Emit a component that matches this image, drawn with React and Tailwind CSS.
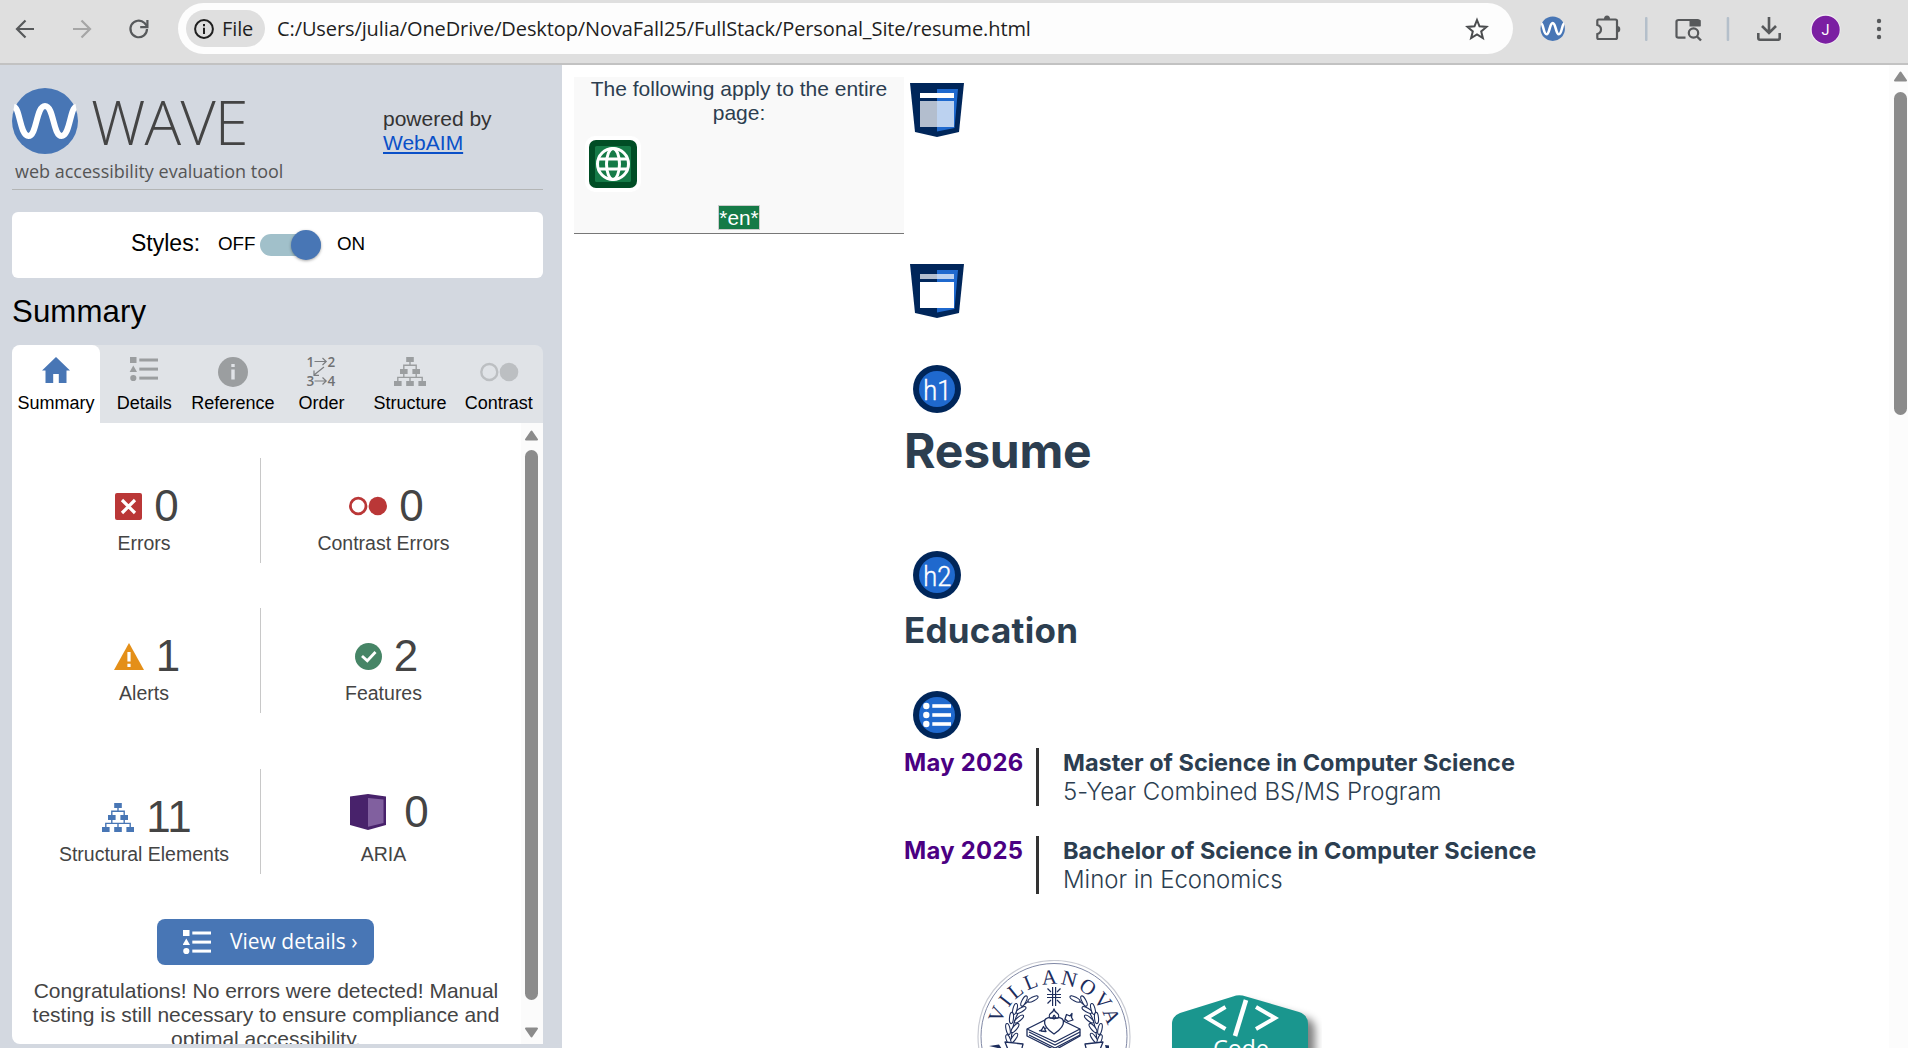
import React from "react";

const BLUE = "#4876b5";

function WaveMark({ size, className = "" }) {
  return (
    <svg width={size} height={size} viewBox="0 0 66 66" className={className}>
      <circle cx="33" cy="33" r="33" fill={BLUE} />
      <path
        d="M2 19 C8 20 8 48 16.5 48 C25 48 24 18 33 18 C42 18 41 48 49.5 48 C58 48 58 20 64 19"
        fill="none"
        stroke="#fff"
        strokeWidth="6"
      />
    </svg>
  );
}

function ListShapes({ color }) {
  return (
    <g fill={color}>
      <rect x="0" y="0" width="6.5" height="6" />
      <path d="M3.3 8.5L7 15H-.4z" />
      <circle cx="3.3" cy="21" r="3.1" />
      <rect x="9.3" y="1.5" width="18.7" height="3" />
      <rect x="9.3" y="10.6" width="18.7" height="3" />
      <rect x="9.3" y="19.6" width="18.7" height="3" />
    </g>
  );
}

function TreeShapes({ color }) {
  return (
    <g fill={color}>
      <rect x="12.2" y="0" width="7.6" height="5" />
      <rect x="6" y="12" width="7.6" height="5" />
      <rect x="18.4" y="12" width="7.6" height="5" />
      <rect x="0" y="24" width="7.6" height="5" />
      <rect x="12.2" y="24" width="7.6" height="5" />
      <rect x="24.4" y="24" width="7.6" height="5" />
      <path
        d="M16 5V8.3M9.8 12V8.3H22.2V12M9.8 17V20.4M22.2 17V20.4M3.8 24V20.4H28.2V24M16 20.4V24"
        fill="none"
        stroke={color}
        strokeWidth="1.4"
      />
    </g>
  );
}

function Tab({ label, active, children }) {
  return (
    <div
      className={
        active
          ? "flex w-[88px] flex-col items-center rounded-t-lg bg-white"
          : "flex w-[88.6px] flex-col items-center"
      }
    >
      <svg width="40" height="40" viewBox="0 0 40 40" className="mt-[6px]">
        {children}
      </svg>
      <span className="text-[18px] leading-6 text-black">{label}</span>
    </div>
  );
}

function Stat({ icon, value, label, raised }) {
  return (
    <div className="flex flex-col items-center text-[#444]">
      <div
        className={
          raised
            ? "mt-[21px] mb-2 flex h-[44px] items-center gap-[18px] pl-[12px]"
            : "mt-[26px] mb-[3px] flex h-[44px] items-center gap-[12px] pl-[6px]"
        }
      >
        {icon}
        <span className="text-[44px] leading-[44px]">{value}</span>
      </div>
      <span className="text-[19.5px] leading-6">{label}</span>
    </div>
  );
}

function StatRow({ left, right, className }) {
  return (
    <div className={className}>
      <div className="w-[248px] pl-[16px]">{left}</div>
      <div className="w-px bg-[#c8c8c8]" />
      <div className="w-[245px]">{right}</div>
    </div>
  );
}

function Scrollbar({ thumb, down, className }) {
  return (
    <div className={className}>
      <svg width="15" height="11" viewBox="0 0 15 11" className="shrink-0">
        <path d="M7.5 1.5L13 9.5H2z" fill="#8b8b8b" stroke="#8b8b8b" strokeWidth="2" strokeLinejoin="round" />
      </svg>
      <div className={thumb} />
      {down && (
        <svg width="15" height="11" viewBox="0 0 15 11" className="mt-[27px] shrink-0">
          <path d="M7.5 9.5L13 1.5H2z" fill="#8b8b8b" stroke="#8b8b8b" strokeWidth="2" strokeLinejoin="round" />
        </svg>
      )}
    </div>
  );
}

function Shield({ header, className }) {
  return (
    <svg width="54" height="54" viewBox="0 0 54 54" className={className}>
      <path d="M0 0H54L49 49L27 54L5 49z" fill="#00265a" />
      <path d="M27 6H48L44.5 45L27 48.5z" fill="#1f69ce" />
      <rect x="10" y="10" width="34" height="5" fill="#fff" opacity={header ? 1 : 0.7} />
      <rect x="10" y="18" width="34" height="26" fill="#fff" opacity={header ? 0.7 : 1} />
    </svg>
  );
}

function Marker({ label, className }) {
  return (
    <svg width="48" height="48" viewBox="0 0 48 48" className={className}>
      <circle cx="24" cy="24" r="24" fill="#00265a" />
      <circle cx="24" cy="24" r="18" fill="#1f69ce" />
      {label ? (
        <text
          x="10.3"
          y="34.6"
          fontSize="27"
          fontWeight="300"
          textLength="28"
          lengthAdjust="spacingAndGlyphs"
          fill="#fff"
          stroke="#fff"
          strokeWidth="0.4"
          className="font-['Roboto',sans-serif]"
        >
          {label}
        </text>
      ) : (
        <g fill="#fff">
          <circle cx="13.3" cy="15" r="3.2" />
          <circle cx="13.3" cy="24" r="3.2" />
          <circle cx="13.3" cy="33" r="3.2" />
          <rect x="19.3" y="13.2" width="18.7" height="3.6" />
          <rect x="19.3" y="22.2" width="18.7" height="3.6" />
          <rect x="19.3" y="31.2" width="18.7" height="3.6" />
        </g>
      )}
    </svg>
  );
}

function Degree({ date, title, detail }) {
  return (
    <div className="flex h-[58px] leading-[29px] whitespace-nowrap">
      <div className="w-[132px] text-[23.8px] font-bold tracking-[0.3px] text-[#4b0082]">{date}</div>
      <div className="w-[3px] bg-[#333]" />
      <div className="ml-6">
        <div className="text-[23.5px] font-bold">{title}</div>
        <div className="text-[24px] font-[350] tracking-[-0.03px]">{detail}</div>
      </div>
    </div>
  );
}

const laurel = [
  [56, 39, 62], [47, 41, 28], [44, 50, 60], [38, 49, 15], [42, 59, 50],
  [34.5, 58, 5], [38, 68, 40], [31, 69, -12], [37, 78, 35], [31.5, 80, -20],
];

function Laurel() {
  return (
    <g fill="#fff" stroke="#1d2d5c" strokeWidth="1.1">
      <path d="M60 36C46 42 34 56 34 86" fill="none" />
      {laurel.map(([x, y, r], i) => (
        <ellipse key={i} cx={x} cy={y} rx="2" ry="5.6" transform={`rotate(${r} ${x} ${y})`} />
      ))}
    </g>
  );
}

function Seal() {
  return (
    <svg width="154" height="88" viewBox="0 0 154 88" className="shrink-0 overflow-hidden">
      <circle cx="77" cy="76.5" r="76" fill="#fff" stroke="#c9cbd3" strokeWidth="1.2" />
      <circle cx="77" cy="76.5" r="73" fill="none" stroke="#8088a5" strokeWidth="1" />
      <path id="sealArc" d="M22 79A55 55 0 0 1 132 79" fill="none" />
      <text
        fontSize="21"
        fill="#1d2d5c"
        textLength="144"
        className="font-['Liberation_Serif',serif]"
      >
        <textPath href="#sealArc" startOffset="15">VILLANOVA</textPath>
      </text>
      <g fill="none" stroke="#1d2d5c" strokeWidth="1.2">
        <path d="M75.6 27V46M78.6 27V46M70 34.5H84M70 37.5H84M70.5 28.5L74 32M83.5 28.5L80 32M70.5 43.5L74 40M83.5 43.5L80 40" />
      </g>
      <Laurel />
      <g transform="matrix(-1 0 0 1 154 0)">
        <Laurel />
      </g>
      <g fill="#fff" stroke="#1d2d5c" strokeWidth="1.3" strokeLinejoin="round">
        <path d="M50 69L76 56L103 69V76L78 90L50 76z" />
        <path d="M50 69L78 82L103 69M52 72L78 85L103 72M52 75L78 88L103 75" fill="none" />
        <path d="M62 71L95 57" fill="none" />
        <path d="M88 59L89.5 54.5L93 56L95 53.5L94.5 57.5L96 60L91 61.5z" />
        <path d="M64 71L66.5 66.5L69 71.5z" />
        <path d="M77 74C62 64 67 54 77 59C87 54 92 64 77 74z" />
        <path d="M73 58C70 53 76 54 77 49C78 54 84 53 81 58zM76 57.5Q77 53 78.5 57.5" />
        <path d="M28 82L46 84L44 92H32zM126 82L108 84L110 92H122z" />
      </g>
      <path d="M12 86L22 84.5L25 89zM128 85L132 85.5V89H129z" fill="#1d2d5c" />
    </svg>
  );
}

function CodeBadge() {
  return (
    <svg width="160" height="54" viewBox="0 0 160 54" className="ml-[40px] shrink-0">
      <defs>
        <filter id="soft" x="-20%" y="-20%" width="150%" height="150%">
          <feGaussianBlur stdDeviation="4" />
        </filter>
        <clipPath id="badgeBounds">
          <rect width="151" height="60" />
        </clipPath>
      </defs>
      <g clipPath="url(#badgeBounds)">
        <path d="M8 28L76 9L138 25Q144 28 144 36V100H8z" fill="#000" opacity="0.5" filter="url(#soft)" />
      </g>
      <path d="M1 30Q1 22 9 19L62 2.5Q68 .2 75 2.5L128 18Q137 21 137 30V80H1z" fill="#1a968e" />
      <g fill="none" stroke="#fff" strokeWidth="4">
        <path d="M54.5 13L36 24L54.5 35M85 13L104 24L85 35" />
        <path d="M75 6L64 42" strokeWidth="4.6" />
      </g>
      <text x="42" y="62.5" fontSize="23.5" fill="#fff" textLength="56" className="font-['Open_Sans',sans-serif]">
        Code
      </text>
    </svg>
  );
}

function BrowserBar() {
  return (
    <div className="flex h-[65px] border-b-2 border-[#c2c2c2] bg-[#dfdfdf] font-['Open_Sans',sans-serif] text-[#1f1f1f]">
      <svg width="178" height="57" viewBox="0 0 178 57" fill="none" strokeWidth="2.2" className="shrink-0">
        <path d="M34 29H17M25.5 20.5L17 29L25.5 37.5" stroke="#57595b" />
        <path d="M73 29H90M81.5 20.5L90 29L81.5 37.5" stroke="#a6a6a6" />
        <path d="M147 29A8.3 8.3 0 1 1 144.5 23L147 26" stroke="#57595b" />
        <path d="M147.4 20V27.2H140.2" stroke="#57595b" />
      </svg>
      <div className="mt-[3px] flex h-[51px] w-[1335px] items-center rounded-full bg-[#fdfdfd] pl-2 text-[20px]">
        <div className="flex h-[37px] w-[79px] items-center rounded-full bg-[#dfdfdf] pl-[8px]">
          <svg width="20" height="20" viewBox="0 0 20 20" className="mr-2">
            <circle cx="10" cy="10" r="8.9" fill="none" stroke="#1f1f1f" strokeWidth="2" />
            <path d="M10 8.8V15M10 5V7.3" stroke="#1f1f1f" strokeWidth="2" />
          </svg>
          <span className="text-[20px] tracking-[-0.1px]">File</span>
        </div>
        <span className="ml-3 grow text-[20px] tracking-[-0.1px] whitespace-nowrap">
          C:/Users/julia/OneDrive/Desktop/NovaFall25/FullStack/Personal_Site/resume.html
        </span>
        <svg width="24" height="24" viewBox="0 0 24 24" className="mr-[24px]">
          <path
            d="M12 3L14.5 9.3L21.5 9.9L16.2 14.4L17.9 21.2L12 17.5L6.1 21.2L7.8 14.4L2.5 9.9L9.5 9.3z"
            fill="none"
            stroke="#4b4d4f"
            strokeWidth="2"
          />
        </svg>
      </div>
      <svg width="395" height="60" viewBox="1513 0 395 60" className="shrink-0">
        <g transform="translate(1540.5 16.5) scale(.37)">
          <circle cx="33" cy="33" r="33" fill={BLUE} />
          <path
            d="M2 19 C8 20 8 48 16.5 48 C25 48 24 18 33 18 C42 18 41 48 49.5 48 C58 48 58 20 64 19"
            fill="none"
            stroke="#fff"
            strokeWidth="7"
          />
        </g>
        <path
          d="M1598.5 19.5H1615.5Q1617 19.5 1617 21V37.5Q1617 39 1615.5 39H1598.5Q1597.3 39 1597.3 37.5V34Q1601 33 1601 29.5Q1601 26 1597.3 25V21Q1597.3 19.5 1598.5 19.5z"
          fill="none"
          stroke="#57595b"
          strokeWidth="2.2"
        />
        <path d="M1604 19A3 3.5 0 0 1 1610 19zM1617 26A3.3 3.3 0 0 1 1617 32.6z" fill="#57595b" />
        <rect x="1645" y="17" width="2.5" height="24" rx="1" fill="#b4bfca" />
        <rect x="1726.7" y="17" width="2.5" height="24" rx="1" fill="#b4bfca" />
        <path
          d="M1685.5 37.7H1678.5Q1676.5 37.7 1676.5 36V21.5Q1676.5 20 1678.5 20H1697.5Q1699.5 20 1699.5 21.5V26"
          fill="none"
          stroke="#57595b"
          strokeWidth="2.2"
        />
        <rect x="1689.5" y="20" width="11" height="6.5" fill="#57595b" />
        <circle cx="1693.5" cy="33" r="4.7" fill="none" stroke="#57595b" strokeWidth="2.2" />
        <path d="M1697 36.5L1701 40.5" stroke="#57595b" strokeWidth="2.4" />
        <path
          d="M1769 17V32M1762 26L1769 33L1776 26M1758.3 33V38Q1758.3 39.7 1760 39.7H1778Q1779.7 39.7 1779.7 38V33"
          fill="none"
          stroke="#57595b"
          strokeWidth="2.6"
        />
        <circle cx="1825.5" cy="29.5" r="15" fill="#f4f0f5" />
        <circle cx="1825.7" cy="29.7" r="14" fill="#7b1fa2" />
        <text x="1825.5" y="35" textAnchor="middle" fontSize="14.5" fill="#fff" className="font-['Roboto',sans-serif]">
          J
        </text>
        <g fill="#57595b">
          <circle cx="1879" cy="21" r="2.2" />
          <circle cx="1879" cy="29" r="2.2" />
          <circle cx="1879" cy="37" r="2.2" />
        </g>
      </svg>
    </div>
  );
}

function Sidebar() {
  return (
    <aside className="flex w-[562px] shrink-0 flex-col bg-[#d3d8e0] pr-[19px] pl-3">
      <div className="flex h-[125px] border-b border-[#b3b5b5]">
        <div className="w-[372px] pt-[22px]">
          <div className="flex h-[67px] items-center">
            <WaveMark size={66} />
            <span className="ml-[13px] pt-[2px] font-['Open_Sans',sans-serif] text-[61px] leading-none font-light tracking-[-0.8px] text-[#444]">
              WAVE
            </span>
          </div>
          <div className="pl-[3px] font-['Open_Sans',sans-serif] text-[18px] leading-[34px] text-[#555]">
            web accessibility evaluation tool
          </div>
        </div>
        <div className="-ml-px pt-[42px] text-[21px] leading-6 text-[#333]">
          powered by
          <br />
          <span className="text-[#0a50c8] underline decoration-2 underline-offset-2">WebAIM</span>
        </div>
      </div>

      <div className="mt-[22px] flex h-[66px] items-center rounded-md bg-white pl-[119px] text-black">
        <span className="w-[87px] pb-1 text-[23px]">Styles:</span>
        <span className="w-[42px] pb-[2px] text-[18.8px]">OFF</span>
        <div className="flex h-[22px] w-[61px] items-center justify-end rounded-full bg-[#a1c0ca]">
          <div className="size-[30px] shrink-0 rounded-full bg-[#4876b5] shadow-[0_1px_3px_rgba(0,0,0,0.35)]" />
        </div>
        <span className="ml-4 pb-[2px] text-[18.8px]">ON</span>
      </div>

      <h1 className="text-[31.2px] leading-[67px] tracking-[0.1px] text-black">Summary</h1>

      <div className="flex h-[78px] rounded-t-lg bg-[#e0e3e7]">
        <Tab label="Summary" active>
          <path d="M20 6L34 19.5H30.5V32H22.8V23H17.2V32H9.5V19.5H6z" fill={BLUE} />
        </Tab>
        <Tab label="Details">
          <g transform="translate(6 6)">
            <ListShapes color="#9b9ea0" />
          </g>
        </Tab>
        <Tab label="Reference">
          <circle cx="20" cy="21" r="15" fill="#9b9ea0" />
          <path d="M20 13V16M20 18.5V28.5" stroke="#e0e3e7" strokeWidth="3.4" />
        </Tab>
        <Tab label="Order">
          <g fill="#6f7173" fontSize="13.5" fontWeight="600" className="font-['Open_Sans',sans-serif]">
            <text x="5.5" y="15.5">1</text>
            <text x="26.5" y="15.5">2</text>
            <text x="5.5" y="35">3</text>
            <text x="26.5" y="35">4</text>
          </g>
          <path
            d="M13.5 10.5H25M21.5 7L25.2 10.5L21.5 14M13.5 30H25M21.5 26.5L25.2 30L21.5 33.5M23 16L13 24M13 19.5V24.3H18"
            fill="none"
            stroke="#7b7d7f"
            strokeWidth="1.2"
          />
        </Tab>
        <Tab label="Structure">
          <g transform="translate(4 6)">
            <TreeShapes color="#9b9ea0" />
          </g>
        </Tab>
        <Tab label="Contrast">
          <circle cx="10.3" cy="21" r="8" fill="none" stroke="#bcbfc2" strokeWidth="2.4" />
          <circle cx="30" cy="21" r="9.3" fill="#bcbfc2" />
        </Tab>
      </div>

      <div className="flex h-[621px] overflow-hidden rounded-bl-lg bg-white">
        <div className="flex w-[509px] flex-col pt-[35px]">
          <StatRow
            className="flex h-[105px] shrink-0"
            left={
              <Stat
                label="Errors"
                value="0"
                icon={
                  <svg width="27" height="27" viewBox="0 0 27 27">
                    <rect width="27" height="27" rx="2" fill="#ba3737" />
                    <path d="M7 7L20 20M20 7L7 20" stroke="#fff" strokeWidth="3.2" />
                  </svg>
                }
              />
            }
            right={
              <Stat
                label="Contrast Errors"
                value="0"
                icon={
                  <svg width="38" height="20" viewBox="0 0 38 20">
                    <circle cx="9.2" cy="10" r="7.8" fill="none" stroke="#ba3737" strokeWidth="2.8" />
                    <circle cx="28.8" cy="10" r="9.2" fill="#ba3737" />
                  </svg>
                }
              />
            }
          />
          <StatRow
            className="mt-[45px] flex h-[105px] shrink-0"
            left={
              <Stat
                label="Alerts"
                value="1"
                icon={
                  <svg width="30" height="27" viewBox="0 0 30 27">
                    <path d="M15 0L30 27H0z" fill="#e48f18" />
                    <path d="M15 9V18.5M15 20.8V24" stroke="#fff" strokeWidth="3.2" />
                  </svg>
                }
              />
            }
            right={
              <Stat
                label="Features"
                value="2"
                icon={
                  <svg width="27" height="27" viewBox="0 0 27 27">
                    <circle cx="13.5" cy="13.5" r="13.5" fill="#468566" />
                    <path d="M7 13L12.3 17.8L20.5 9" fill="none" stroke="#fff" strokeWidth="2.8" />
                  </svg>
                }
              />
            }
          />
          <StatRow
            className="mt-[56px] flex h-[105px] shrink-0"
            left={
              <Stat
                label="Structural Elements"
                value="11"
                icon={
                  <svg width="32" height="29" viewBox="0 0 32 29">
                    <TreeShapes color={BLUE} />
                  </svg>
                }
              />
            }
            right={
              <Stat
                label="ARIA"
                value="0"
                raised
                icon={
                  <svg width="36" height="36" viewBox="0 0 36 36">
                    <path d="M0 2.5L18 0L36 2.5V31L18 36L0 31z" fill="#48226b" />
                    <path d="M18 4L33.5 5.5V29L18 32.7z" fill="#81609f" />
                  </svg>
                }
              />
            }
          />
          <button className="mt-[45px] ml-[145px] flex h-[46px] w-[217px] shrink-0 items-center rounded-lg bg-[#4876b5] pl-[26px] text-white">
            <svg width="28" height="25" viewBox="0 0 28 25">
              <ListShapes color="#fff" />
            </svg>
            <span className="ml-[19px] pb-px font-['Open_Sans',sans-serif] text-[21px] whitespace-nowrap">
              View details ›
            </span>
          </button>
          <p className="mt-[14px] -ml-px text-center text-[21px] leading-6 whitespace-nowrap text-[#444]">
            Congratulations! No errors were detected! Manual
            <br />
            testing is still necessary to ensure compliance and
            <br />
            optimal accessibility.
          </p>
        </div>
        <Scrollbar
          down
          className="flex w-[22px] flex-col items-center bg-[#fbfbfb] pt-[7px] pr-0.5"
          thumb="mt-[9px] h-[550px] w-[13px] shrink-0 rounded-full bg-[#8b8b8b]"
        />
      </div>
    </aside>
  );
}

function ResumePage() {
  return (
    <main className="flex grow items-start overflow-hidden bg-white pl-3 text-[#2c3e50]">
      <div className="mt-3 flex h-[157px] w-[330px] shrink-0 flex-col items-center border-b border-[#777] bg-[#f9f9f9] text-center text-[21px] leading-6">
        <div>
          The following apply to the entire
          <br />
          page:
        </div>
        <div className="mt-[11px] ml-[11px] self-start rounded-[10px] bg-white p-1">
          <svg width="48" height="48" viewBox="0 0 48 48">
            <rect width="48" height="48" rx="7" fill="#004d25" />
            <rect x="6" y="6" width="36" height="36" rx="1.5" fill="#157a47" />
            <g fill="none" stroke="#fff" strokeWidth="3">
              <circle cx="24" cy="24" r="15.5" />
              <ellipse cx="24" cy="24" rx="6.5" ry="15.5" />
              <path d="M10 19H38M10 29H38" />
            </g>
          </svg>
        </div>
        <span className="mt-[13px] flex h-[25px] w-[42px] items-center justify-center border border-[#ccc] bg-[#157a47] text-[20.8px] leading-[23px] text-white">
          *en*
        </span>
      </div>

      <div className="flex grow flex-col items-start pt-[18px] font-['Inter',sans-serif]">
        <Shield header className="ml-[6px]" />
        <Shield className="mt-[127px] ml-[6px]" />
        <Marker label="h1" className="mt-[47px] ml-[9px]" />
        <h1 className="mt-[8px] text-[48px] leading-[60px] font-bold tracking-[-0.2px]">Resume</h1>
        <Marker label="h2" className="mt-[70px] ml-[9px]" />
        <h2 className="mt-[6px] text-[35px] leading-[50px] font-bold tracking-[0.25px]">Education</h2>
        <Marker className="mt-[36px] ml-[9px]" />
        <div className="mt-[9px] flex flex-col gap-[30px]">
          <Degree
            date="May 2026"
            title="Master of Science in Computer Science"
            detail="5-Year Combined BS/MS Program"
          />
          <Degree
            date="May 2025"
            title="Bachelor of Science in Computer Science"
            detail="Minor in Economics"
          />
        </div>
        <div className="mt-[66px] ml-[73px] flex">
          <Seal />
          <div className="pt-[34px]">
            <CodeBadge />
          </div>
        </div>
      </div>

      <Scrollbar
        className="flex h-full w-[19px] flex-col items-end bg-[#fcfcfc] pt-[6px]"
        thumb="mt-[10px] mr-px h-[323px] w-[13px] shrink-0 rounded-full bg-[#8b8b8b]"
      />
    </main>
  );
}

export default function App() {
  return (
    <div className="flex h-[1048px] w-[1908px] flex-col overflow-hidden font-['Liberation_Sans',Arial,sans-serif]">
      <BrowserBar />
      <div className="flex h-[983px]">
        <Sidebar />
        <ResumePage />
      </div>
    </div>
  );
}
